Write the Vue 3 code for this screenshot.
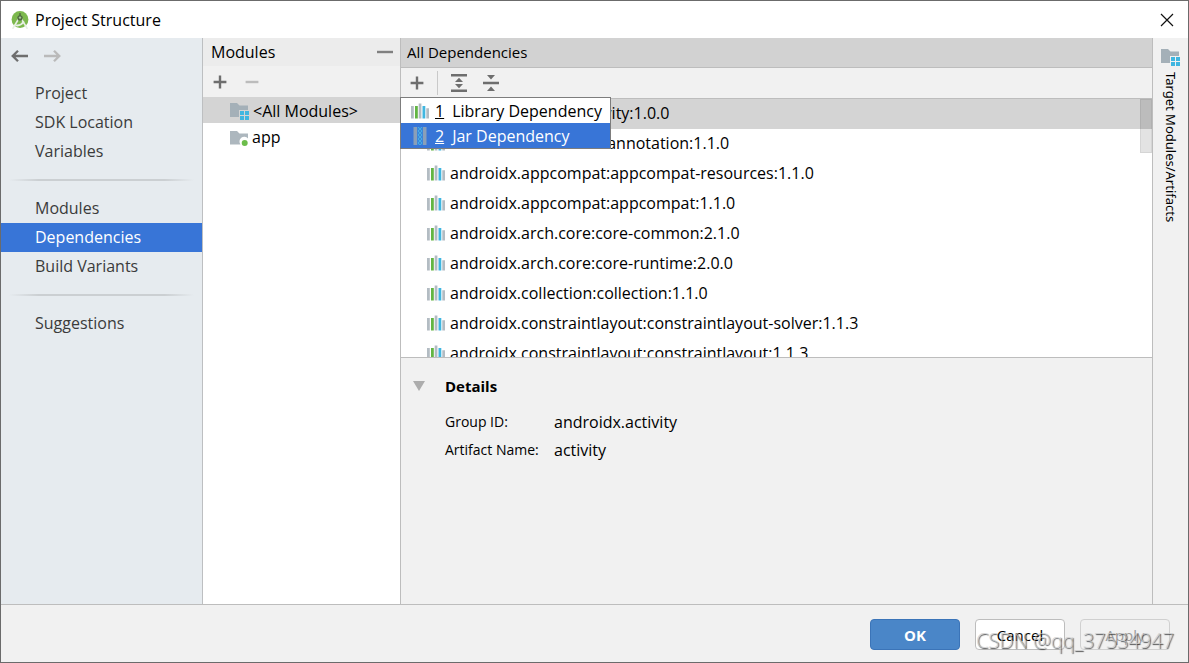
<script setup>
import { ref } from 'vue'

const navGroups = [
  ['Project', 'SDK Location', 'Variables'],
  ['Modules', 'Dependencies', 'Build Variants'],
  ['Suggestions'],
]
const activeNav = ref('Dependencies')
const activeModule = ref('all')
const dependencies = [
  'androidx.activity:activity:1.0.0',
  'androidx.annotation:annotation:1.1.0',
  'androidx.appcompat:appcompat-resources:1.1.0',
  'androidx.appcompat:appcompat:1.1.0',
  'androidx.arch.core:core-common:2.1.0',
  'androidx.arch.core:core-runtime:2.0.0',
  'androidx.collection:collection:1.1.0',
  'androidx.constraintlayout:constraintlayout-solver:1.1.3',
  'androidx.constraintlayout:constraintlayout:1.1.3',
]
const activeDep = ref(0)
</script>

<template>
  <div class="window">
    <header class="titlebar">
      <svg class="logo" width="18" height="18" viewBox="0 0 18 18">
        <circle cx="9" cy="8.5" r="8.4" fill="#7cb84d" />
        <path d="M7.6 8 3 15.5 1.6 17.8M10.4 8 15 15.5 16.4 17.8" stroke="#e8efe4" stroke-width="1.6" fill="none" />
        <path d="M4.5 14.2Q9 15.6 13 10.5" stroke="#e8efe4" stroke-width="1.8" fill="none" />
        <path d="M9 3.2 11.8 6 11 9.5H7L6.2 6z" fill="#4f6b3f" />
        <circle cx="9" cy="6.6" r="1.2" fill="#a9c79a" />
        <path d="M9 2v2" stroke="#4f6b3f" stroke-width="1.4" />
      </svg>
      <h1>Project Structure</h1>
      <button class="close" aria-label="Close">
        <svg width="14" height="14" viewBox="0 0 14 14"><path d="M1 1 13 13M13 1 1 13" stroke="#111" stroke-width="1.2" /></svg>
      </button>
    </header>

    <div class="body">
      <nav class="sidebar">
        <div class="history">
          <button aria-label="Back">
            <svg width="17" height="14" viewBox="0 0 17 14"><path d="M7 1.7 1.7 7 7 12.3M1.7 7H17" stroke="#6e6e6e" stroke-width="2.3" fill="none" /></svg>
          </button>
          <button aria-label="Forward" disabled>
            <svg width="17" height="14" viewBox="0 0 17 14"><path d="M10 1.7 15.3 7 10 12.3M15.3 7H0" stroke="#bababa" stroke-width="2.3" fill="none" /></svg>
          </button>
        </div>
        <ul v-for="(group, i) in navGroups" :key="i" class="group">
          <li v-for="item in group" :key="item">
            <a href="#" :class="{ active: item === activeNav }" @click.prevent="activeNav = item">{{ item }}</a>
          </li>
        </ul>
      </nav>

      <section class="modules">
        <div class="modules-head">
          <h2>Modules</h2>
          <button aria-label="Hide panel">
            <svg width="16" height="4" viewBox="0 0 16 4"><path d="M0 2h16" stroke="#808080" stroke-width="2.4" /></svg>
          </button>
        </div>
        <div class="modules-tools">
          <button aria-label="Add module">
            <svg width="14" height="14" viewBox="0 0 14 14"><path d="M7 .6v12.8M.6 7h12.8" stroke="#6e6e6e" stroke-width="2.4" /></svg>
          </button>
          <button aria-label="Remove module" disabled>
            <svg width="14" height="14" viewBox="0 0 14 14"><path d="M.6 7h12.8" stroke="#bcbcbc" stroke-width="2.4" /></svg>
          </button>
        </div>
        <ul class="module-list">
          <li>
            <button :class="{ active: activeModule === 'all' }" @click="activeModule = 'all'">
              <svg width="20" height="18" viewBox="0 0 20 18">
                <path d="M0 1h7l2.5 2.5H18V8H9v7H0z" fill="#a4b0b8" />
                <path d="M10 9h4v4h-4zM15 9h4v4h-4zM10 14h4v4h-4zM15 14h4v4h-4z" fill="#40b6e0" />
              </svg>
              <span>&lt;All Modules&gt;</span>
            </button>
          </li>
          <li>
            <button :class="{ active: activeModule === 'app' }" @click="activeModule = 'app'">
              <svg width="19" height="18" viewBox="0 0 19 18">
                <path d="M0 3h7l2.5 2.5H18v5A4.5 4.5 0 0 0 10.5 16.5H0z" fill="#adb7be" />
                <circle cx="14.7" cy="15" r="3" fill="#6cbd4b" />
              </svg>
              <span>app</span>
            </button>
          </li>
        </ul>
      </section>

      <main class="content">
        <h2 class="content-head">All Dependencies</h2>
        <div class="content-tools">
          <button aria-label="Add dependency">
            <svg width="14" height="14" viewBox="0 0 14 14"><path d="M7 .6v12.8M.6 7h12.8" stroke="#6e6e6e" stroke-width="2.4" /></svg>
          </button>
          <span class="rule"></span>
          <button aria-label="Expand all">
            <svg width="16" height="18" viewBox="0 0 16 18"><path d="M0 0h16v2.5H0zM0 15.5h16V18H0zM8 3.7 12 8H4zM8 14.3 4 10h8z" fill="#6e6e6e" /></svg>
          </button>
          <button aria-label="Collapse all">
            <svg width="16" height="18" viewBox="0 0 16 18"><path d="M0 7.7h16v2.6H0zM4 1h8L8 5.5zM4 17h8l-4-4.5z" fill="#6e6e6e" /></svg>
          </button>
          <div class="popup" role="menu">
            <button role="menuitem">
              <svg width="18" height="16" viewBox="0 0 18 16">
                <path d="M0 3h2.8v12.5H0zM7.7 .4h2.7v15.1H7.7zM15.3 5.2H18v10.3h-2.7z" fill="#b3bcc3" />
                <path d="M4 3h2.8v12.5H4z" fill="#62b543" /><path d="M11.5 3h2.8v12.5h-2.8z" fill="#40b6e0" />
              </svg>
              <u>1</u><span>Library Dependency</span>
            </button>
            <button role="menuitem" class="active">
              <svg width="18" height="18" viewBox="0 0 18 18">
                <path d="M2.5 0H6v18H2.5zM12 0h3.5v18H12z" fill="#8a9fb8" />
                <path d="M6 0h6v18H6z" fill="#3c86da" />
                <path d="M7 0l2 2-2 2 2 2-2 2 2 2-2 2 2 2-2 2 2 2M11 0 9 2l2 2-2 2 2 2-2 2 2 2-2 2 2 2-2 2" stroke="#45aee6" stroke-width="1" fill="none" />
              </svg>
              <u>2</u><span>Jar Dependency</span>
            </button>
          </div>
        </div>
        <div class="dep-area">
          <ul class="dep-list">
            <li v-for="(dep, i) in dependencies" :key="dep">
              <button :class="{ active: activeDep === i }" @click="activeDep = i">
                <svg width="18" height="16" viewBox="0 0 18 16">
                  <path d="M0 3h2.8v12.5H0zM7.7 .4h2.7v15.1H7.7zM15.3 5.2H18v10.3h-2.7z" fill="#b3bcc3" />
                  <path d="M4 3h2.8v12.5H4z" fill="#62b543" /><path d="M11.5 3h2.8v12.5h-2.8z" fill="#40b6e0" />
                </svg>
                <span>{{ dep }}</span>
              </button>
            </li>
          </ul>
          <div class="thumb"></div>
        </div>
        <section class="details">
          <h3>
            <svg width="12" height="10" viewBox="0 0 12 10"><path d="M0 0h12L6 10z" fill="#adadad" /></svg>
            <span>Details</span>
          </h3>
          <dl>
            <dt>Group ID:</dt>
            <dd>androidx.activity</dd>
            <dt>Artifact Name:</dt>
            <dd>activity</dd>
          </dl>
        </section>
      </main>

      <aside class="stripe">
        <button>
          <svg width="20" height="18" viewBox="0 0 20 18">
            <path d="M0 1h7l2.5 2.5H18V8H9v7H0z" fill="#a4b0b8" />
            <path d="M10 9h4v4h-4zM15 9h4v4h-4zM10 14h4v4h-4zM15 14h4v4h-4z" fill="#40b6e0" />
          </svg>
          <span>Target Modules/Artifacts</span>
        </button>
      </aside>
    </div>

    <footer class="footer">
      <button class="primary">OK</button>
      <button>Cancel</button>
      <button disabled>Apply</button>
      <span class="watermark">CSDN @qq_37534947</span>
    </footer>
  </div>
</template>

<style>
body {
  background: #f1f1f1;
}
</style>

<style scoped>
.window {
  box-sizing: border-box;
  display: flex;
  flex-direction: column;
  height: 100vh;
  border: 1px solid #6b6b6b;
  background: #f1f1f1;
  color: #000;
  font: 16px/20px "Open Sans", "Noto Sans", sans-serif;
}
h1, h2, h3, ul, dl, dd {
  margin: 0;
  padding: 0;
  font-size: inherit;
  font-weight: 400;
  list-style: none;
}
button {
  margin: 0;
  padding: 0;
  border: 0;
  background: none;
  color: inherit;
  font: inherit;
}
svg {
  display: block;
  flex: none;
}
.titlebar {
  display: flex;
  align-items: center;
  flex: none;
  height: 37px;
  padding: 0 14px 0 10px;
  background: #fff;
}
.titlebar h1 {
  flex: 1;
  margin-left: 6px;
}
.body {
  display: flex;
  flex: 1;
  min-height: 0;
}
.sidebar {
  flex: none;
  width: 201px;
  border-right: 1px solid #bdbfc1;
  background: #e6ebef;
  color: #3b3b3b;
}
.history {
  display: flex;
  gap: 16px;
  padding: 11px 10px 16px;
}
.group a {
  display: block;
  padding-left: 34px;
  color: inherit;
  line-height: 29px;
  text-decoration: none;
}
.group a.active {
  background: #3875d7;
  color: #fff;
}
.group + .group::before {
  content: "";
  display: block;
  height: 2px;
  margin: 13px 8px;
  background: linear-gradient(90deg, transparent, #cbcfd2 16%, #cbcfd2 84%, transparent);
}
.modules {
  flex: none;
  width: 197px;
  border-right: 1px solid #bdbdbd;
  background: #fff;
}
.modules-head {
  display: flex;
  align-items: center;
  justify-content: space-between;
  height: 28px;
  padding: 0 7px 0 8px;
  background: #ececec;
}
.modules-tools {
  display: flex;
  align-items: center;
  gap: 18px;
  height: 31px;
  padding-left: 10px;
  background: #f1f1f1;
}
.module-list button {
  display: flex;
  align-items: center;
  gap: 3px;
  width: 100%;
  height: 26px;
  padding: 2px 0 0 27px;
}
.module-list .active, .dep-list .active {
  background: #d4d4d4;
}
.content {
  display: flex;
  flex: 1;
  flex-direction: column;
  min-width: 0;
}
.content-head {
  height: 29px;
  padding-left: 6px;
  border-bottom: 1px solid #bdbdbd;
  background: #d2d2d2;
  font-size: 15px;
  line-height: 29px;
}
.content-tools {
  position: relative;
  display: flex;
  align-items: center;
  height: 30px;
  padding-left: 9px;
  border-bottom: 1px solid #bdbdbd;
}
.rule {
  width: 1px;
  height: 24px;
  margin: 0 13px;
  background: #c9c9c9;
}
.content-tools > button + button {
  margin-left: 16px;
}
.popup {
  position: absolute;
  z-index: 2;
  top: 29px;
  left: -1px;
  width: 209px;
  border: 1px solid #7d7d7d;
  background: #fff;
}
.popup button {
  display: flex;
  align-items: center;
  width: 100%;
  height: 25px;
  padding-left: 10px;
  white-space: nowrap;
}
.popup u {
  margin: 0 8px 0 6px;
}
.popup .active {
  background: #3875d7;
  color: #fff;
}
.dep-area {
  position: relative;
  flex: 0 0 258px;
  overflow: hidden;
  border-bottom: 1px solid #bdbdbd;
  background: #fff;
}
.dep-list button {
  display: flex;
  align-items: center;
  gap: 5px;
  width: 100%;
  height: 30px;
  padding: 0 0 2px 26px;
}
.thumb {
  position: absolute;
  top: 0;
  right: 0;
  box-sizing: border-box;
  width: 12px;
  height: 54px;
  border: 1px solid rgba(0, 0, 0, 0.06);
  background: rgba(0, 0, 0, 0.11);
}
.details {
  padding: 18px 12px;
}
.details h3 {
  display: flex;
  align-items: center;
  gap: 20px;
  font-size: 15px;
  font-weight: 700;
}
.details dl {
  display: grid;
  grid-template-columns: 109px 1fr;
  row-gap: 8px;
  padding: 16px 0 0 32px;
}
.details dt {
  font-size: 14px;
}
.stripe {
  flex: none;
  width: 35px;
  border-left: 1px solid #bdbdbd;
}
.stripe button {
  display: flex;
  flex-direction: column;
  align-items: center;
  gap: 6px;
  width: 100%;
  padding-top: 10px;
}
.stripe span {
  font-family: "Noto Sans", "Open Sans", sans-serif;
  font-size: 13px;
  line-height: 16px;
  writing-mode: vertical-rl;
}
.footer {
  position: relative;
  display: flex;
  flex: none;
  gap: 15px;
  justify-content: flex-end;
  height: 43px;
  padding: 14px 18px 0 0;
  border-top: 1px solid #bdbdbd;
}
.footer button {
  box-sizing: border-box;
  width: 90px;
  height: 31px;
  border: 1px solid #bdbdbd;
  border-radius: 4px;
  background: #fff;
  font-size: 15px;
}
.footer .primary {
  border-color: #3b74b8;
  background: #4a86c8;
  color: #fff;
  font-weight: 700;
}
.footer button:disabled {
  border-color: #d0d0d0;
  background: #f1f1f1;
  color: #9b9b9b;
}
.watermark {
  position: absolute;
  right: 14px;
  bottom: 8px;
  color: rgba(205, 205, 205, 0.75);
  font-size: 20px;
  font-weight: 300;
  line-height: 26px;
  text-shadow: 1px 1px 1px rgba(50, 50, 50, 0.85);
  pointer-events: none;
}
</style>
